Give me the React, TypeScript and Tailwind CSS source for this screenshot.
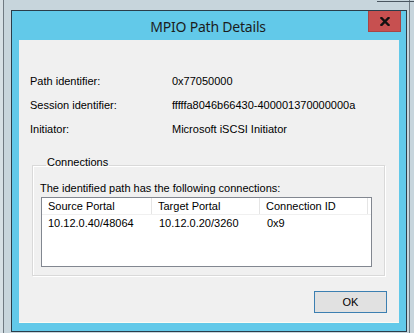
import React from 'react';

const font = { fontFamily: '"Liberation Sans", Arial, sans-serif' };

const details = [
  { label: 'Path identifier:', value: '0x77050000' },
  { label: 'Session identifier:', value: 'fffffa8046b66430-400001370000000a' },
  { label: 'Initiator:', value: 'Microsoft iSCSI Initiator' },
];

const columns = ['Source Portal', 'Target Portal', 'Connection ID'];
const rows = [['10.12.0.40/48064', '10.12.0.20/3260', '0x9']];

const App: React.FC = () => {
  return (
    <div className="relative w-[414px] h-[333px] overflow-hidden bg-[#c7d5dc]" style={font}>
      {/* windows behind the dialog */}
      <div className="absolute left-[3px] top-0 bottom-0 w-px bg-[#6f7a82]" />
      <div className="absolute left-0 top-0 bottom-0 w-[3px] bg-[#d6e0e5]" />
      <div className="absolute right-[4px] top-0 bottom-0 w-px bg-[#6f7a82]" />
      <div className="absolute left-[377px] right-0 top-[1px] h-px bg-[#4a5660]" />

      <div className="relative ml-[11px] mt-[10px] w-[396px] h-[322px] border border-[#2a3d4a] bg-[#62c9e9] flex flex-col">
        {/* title bar */}
        <div className="relative h-[29px] flex items-center justify-center">
          <span
            className="text-[14px] tracking-[-0.2px] text-[#1c1c1c] pt-[1px] pr-[2px]"
            style={{ fontFamily: '"Noto Sans", "Open Sans", sans-serif' }}
          >
            MPIO Path Details
          </span>
          <button
            type="button"
            className="absolute right-[5px] top-0 w-[33px] h-[21px] bg-[#c75050] border border-[#a84444] border-t-0 flex items-center justify-center"
          >
            <svg width="10" height="9" viewBox="0 0 10 9">
              <path d="M1.5 1 L8.5 8 M8.5 1 L1.5 8" stroke="#111" strokeWidth="2.4" strokeLinecap="square" />
            </svg>
          </button>
        </div>

        {/* client area */}
        <div className="mx-[7px] h-[283px] bg-[#f0f0f0] text-[11px] text-black flex flex-col border-b border-[#fbfbf3]">
          <div className="pt-[29px] pl-[11px]">
            {details.map((d) => (
              <div key={d.label} className="h-[24px] flex items-center">
                <span className="w-[142px]">{d.label}</span>
                <span>{d.value}</span>
              </div>
            ))}
          </div>

          <fieldset className="mt-[16px] ml-[13px] w-[353px] border border-[#d9d9d9] shadow-[1px_1px_0_#ffffff,inset_1px_1px_0_#ffffff] pl-[7px] pb-[8px]">
            <legend className="ml-[6px] px-[1px] leading-[11px] pb-[5px]">Connections</legend>
            <div className="mt-[8px] h-[14px] leading-[14px]">
              The identified path has the following connections:
            </div>
            <div className="mt-[2px] ml-[1px] w-[331px] h-[70px] border border-[#828790] bg-white">
              <div className="flex h-[17px] border-b border-[#f0f0f0]">
                {columns.map((c) => (
                  <div
                    key={c}
                    className="w-[108px] first:w-[110px] pl-[6px] border-r border-[#e5e5e5] flex items-center"
                  >
                    {c}
                  </div>
                ))}
              </div>
              {rows.map((r) => (
                <div key={r[0]} className="flex h-[17px] items-center">
                  {r.map((cell, i) => (
                    <div key={i} className={i === 0 ? 'w-[111px] pl-[6px]' : 'w-[108px] pl-[6px]'}>
                      {cell}
                    </div>
                  ))}
                </div>
              ))}
            </div>
          </fieldset>

          <div className="flex justify-end pr-[12px] mt-[15px]">
            <button
              type="button"
              className="w-[73px] h-[22px] bg-[#e1e1e1] border border-[#3c7fb1] text-[11px] text-black flex items-center justify-center"
            >
              OK
            </button>
          </div>
        </div>
      </div>
    </div>
  );
};

export default App;
